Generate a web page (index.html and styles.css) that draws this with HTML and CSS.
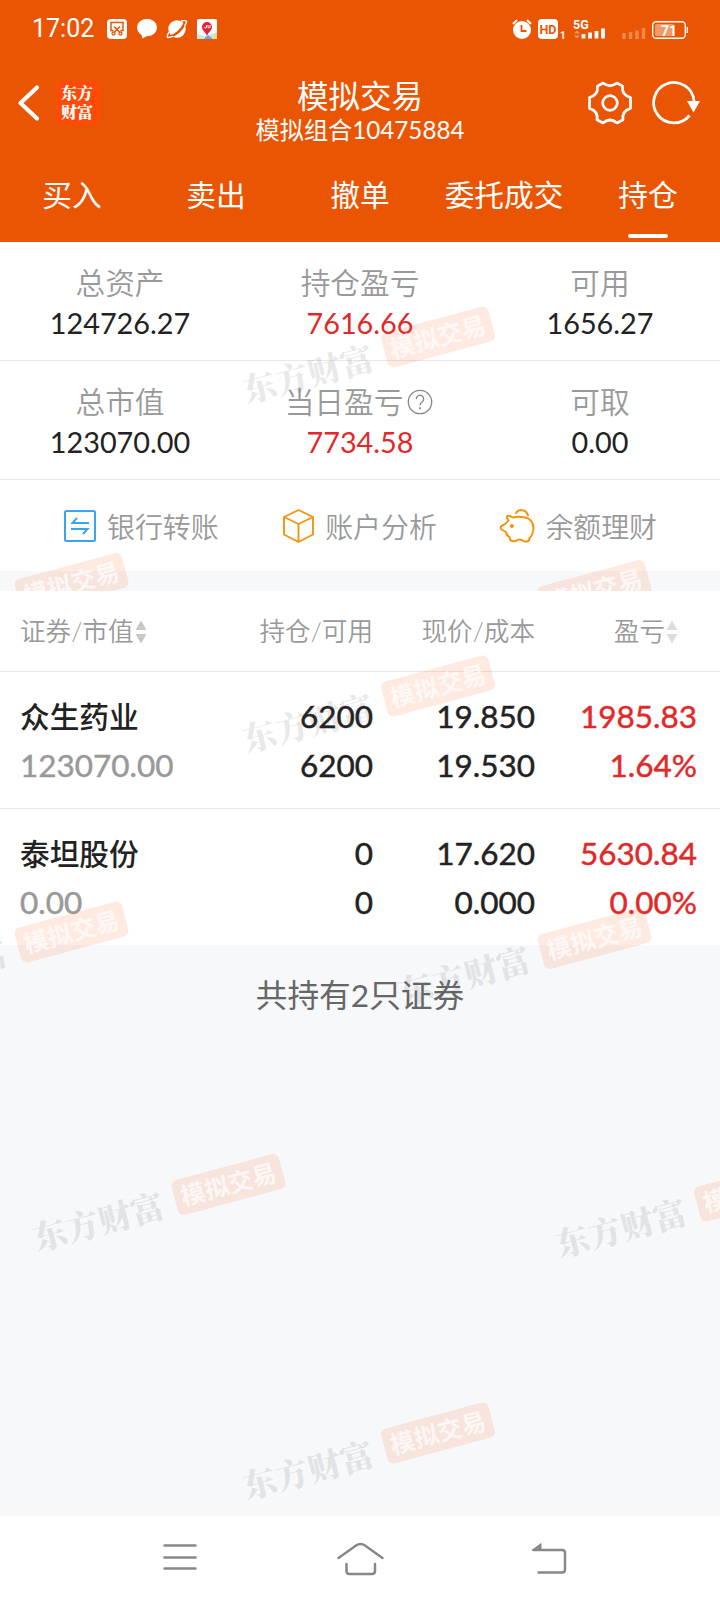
FILE: index.html
```html
<!DOCTYPE html>
<html lang="zh-CN">
<head>
<meta charset="utf-8">
<title>模拟交易</title>
<link rel="stylesheet" href="styles.css">
</head>
<body>
<div class="screen">
  <header class="header">
    <div class="status">
      <span class="clock">17:02</span>
      <svg class="status-left" width="112" height="24" viewBox="106 17 112 24">
        <rect x="107" y="19" width="20" height="20" rx="4" fill="#fff"/>
        <path d="M113.500 30.500h-2.500v-8h12v8h-2.500M114 26.500l6 6M120 26.500l-6 6" fill="none" stroke="#ea5504" stroke-width="1.500"/>
        <circle cx="113.500" cy="33.500" r="1.500" fill="none" stroke="#ea5504" stroke-width="1.300"/><circle cx="120.500" cy="33.500" r="1.500" fill="none" stroke="#ea5504" stroke-width="1.300"/>
        <ellipse cx="147" cy="27.500" rx="10" ry="8.700" fill="#fff"/><path d="M141 33l1.500 5.500 6-3.500z" fill="#fff"/>
        <circle cx="177" cy="29" r="8.700" fill="#fff"/>
        <path d="M169 36.500q10-1 16.500-14.500" fill="none" stroke="#ea5504" stroke-width="2.600"/>
        <path d="M169 32q-3 5-1 5.500 3 0 5-1.500M181 21q6-1 5.500 1-1 3-2 4" fill="none" stroke="#fff" stroke-width="1.400"/>
        <rect x="197" y="19" width="20" height="20" rx="1.500" fill="#fff"/>
        <path d="M197 34l8 2 12-4v7h-20z" fill="#c8e6e8"/><path d="M204 39l4-4 5 4z" fill="#5da9e8"/><path d="M212 36l5-3v6h-2z" fill="#f4dc87"/>
        <path d="M207 36c-1-4-5-5-5-9a5 5 0 0 1 10 0c0 4-4 5-5 9z" fill="#e0243a"/>
        <path d="M204.500 27a1 1 0 0 0 2 0v-2M208 25v2a1 1 0 0 0 2 0v-2" fill="none" stroke="#fff" stroke-width="1"/>
      </svg>
      <svg class="status-right" width="178" height="24" viewBox="511 17 178 24">
        <circle cx="522" cy="30" r="9" fill="#fff"/><path d="M521.500 25v6h5" fill="none" stroke="#ea5504" stroke-width="1.800"/>
        <path d="M513 24l4-4M527 20l4 4" stroke="#fff" stroke-width="2"/>
        <rect x="538" y="19" width="20" height="20" rx="4" fill="#fff"/>
        <text x="548" y="33.500" class="t-hd">HD</text><text x="560" y="39" class="t-one">1</text>
        <text x="573" y="28.500" class="t-5g">5G</text>
        <path d="M574 33.500l3-3 3 3zM574 35.500l3 3 3-3z" fill="#fff" opacity=".4"/>
        <path d="M583.500 34v4.500M590 32.500v6M596.500 31v7.500M603 28.500v10" stroke="#fff" stroke-width="3.800"/>
        <path d="M624 33v6M630.500 32v7M637 30.500v8.500M643.500 28v11" stroke="#fff" stroke-width="3.400" opacity=".3"/>
        <rect x="652.700" y="21.700" width="32.600" height="16.600" rx="3.500" fill="none" stroke="#fff" stroke-width="1.400"/>
        <rect x="655" y="24" width="19" height="12" rx="1.500" fill="#fff" opacity=".4"/>
        <path d="M687.300 27v6" stroke="#fff" stroke-width="1.400"/>
        <text x="669" y="35.500" class="t-bat">71</text>
      </svg>
    </div>
    <div class="bar">
      <div class="bar-left">
        <svg width="24" height="40" viewBox="17 83 24 40"><path d="M37 87.500L20.500 103 37 118.500" fill="none" stroke="#fff" stroke-width="4.200" stroke-linecap="round" stroke-linejoin="round"/></svg>
        <div class="logo">东方<br>财富</div>
      </div>
      <div class="titles"><h1>模拟交易</h1><p>模拟组合10475884</p></div>
      <div class="bar-right">
        <svg width="46" height="46" viewBox="587 80 46 46" fill="none" stroke="#fff" stroke-width="2.700" stroke-linejoin="round">
          <path d="M603 83L597.500 86.200Q598.500 95 589.500 97.500V108.500Q598.500 111 597 119.800L603 123Q610 117 617 123L623 119.800Q621.500 111 630.500 108.500V97.500Q621.500 95 622.500 86.200L617 83Q610 88.500 603 83Z"/>
          <circle cx="610" cy="103" r="7.300"/>
        </svg>
        <svg width="50" height="46" viewBox="651 80 50 46"><path d="M694 101A20.200 20.200 0 1 0 689.500 115.500" fill="none" stroke="#fff" stroke-width="2.800"/><path d="M687 101h13l-6.500 11.500z" fill="#fff"/></svg>
      </div>
    </div>
    <nav class="tabs"><span>买入</span><span>卖出</span><span>撤单</span><span>委托成交</span><span class="active">持仓</span></nav>
  </header>

  <section class="account">
    <div class="sums">
      <div class="cell"><span class="label">总资产</span><span class="num">124726.27</span></div>
      <div class="cell"><span class="label">持仓盈亏</span><span class="num red">7616.66</span></div>
      <div class="cell"><span class="label">可用</span><span class="num">1656.27</span></div>
    </div>
    <div class="sums">
      <div class="cell"><span class="label">总市值</span><span class="num">123070.00</span></div>
      <div class="cell"><span class="label help">当日盈亏<svg width="26" height="26" viewBox="0 0 26 26" fill="none" stroke="#888" stroke-width="1.300"><circle cx="13" cy="13" r="11.700"/><path d="M9.300 10a3.700 3.700 0 1 1 5.700 3c-1.500 1-2 1.500-2 3.500"/><path d="M13 18.300v2" stroke-width="1.800"/></svg></span><span class="num red">7734.58</span></div>
      <div class="cell"><span class="label">可取</span><span class="num">0.00</span></div>
    </div>
    <div class="actions">
      <div class="action"><svg width="34" height="34" viewBox="63 509 34 34" fill="none" stroke="#3aa5ee" stroke-width="2"><rect x="65" y="511" width="30" height="30" rx="1.500"/><path d="M89 523H72.500L77 518M71 529h16.500L83 534"/></svg><span>银行转账</span></div>
      <div class="action"><svg width="34" height="36" viewBox="282 508 34 36" fill="none" stroke="#f4950f" stroke-width="1.900" stroke-linejoin="round"><path d="M299.500 510L314 517v17.500L299.500 542 285 534.500V517zM285 517l14.500 7 14.500-7M299.500 524v18"/></svg><span>账户分析</span></div>
      <div class="action"><svg width="36" height="36" viewBox="500 508 36 36" fill="none" stroke="#f4950f" stroke-width="2" stroke-linecap="round" stroke-linejoin="round"><path d="M509.500 520.500Q507 517.500 508.500 515.800Q511 515.500 514 517.500Q520 515.800 526 517.500Q534 519 534.500 528Q534 535 530.500 538Q530.500 541.500 527.500 541.500Q524.500 542 523 540Q520 538.800 518 540Q517 542 513 541Q510.500 540.500 510.500 537Q507.500 535.500 507 532L502.500 529.500Q501 527.500 502.500 526Q506.500 524.500 509.500 520.500Z"/><path d="M517 513q3-4 7.500-2.500 3.500 1 4.500 5"/><circle cx="512.800" cy="526" r="1.600" fill="#f4950f" stroke-width="1"/></svg><span>余额理财</span></div>
    </div>
    <div class="strip"></div>
    <svg class="marks" width="720" height="349" viewBox="0 242 720 349">
      <defs>
        <g id="mark">
          <g transform="rotate(-15)">
            <rect x="-55.500" y="-18" width="111" height="36" rx="6" fill="#ff5a1e" opacity=".13"/>
            <text x="0" y="9" class="m-badge">模拟交易</text>
            <text x="-135" y="15" class="m-brand">东方财富</text>
          </g>
        </g>
      </defs>
      <use href="#mark" x="438" y="337"/><use href="#mark" x="71.500" y="583.500"/><use href="#mark" x="594.500" y="590.500"/>
    </svg>
  </section>

  <main class="main">
    <div class="holdings">
      <div class="row head">
        <span>证券/市值<svg class="sort" width="12" height="24" viewBox="0 0 12 24"><path d="M0.500 10L6 .500 11.500 10zM.500 14L6 23.500 11.500 14z" fill="#c8c8c8"/></svg></span>
        <span>持仓/可用</span><span>现价/成本</span>
        <span class="last">盈亏<svg class="sort" width="12" height="24" viewBox="0 0 12 24"><path d="M0.500 10L6 .500 11.500 10zM.500 14L6 23.500 11.500 14z" fill="#dedede"/></svg></span>
      </div>
      <div class="row">
        <div class="name"><b>众生药业</b><i>123070.00</i></div>
        <div><b>6200</b><b>6200</b></div>
        <div><b>19.850</b><b>19.530</b></div>
        <div class="red"><b>1985.83</b><b>1.64%</b></div>
      </div>
      <div class="row">
        <div class="name"><b>泰坦股份</b><i>0.00</i></div>
        <div><b>0</b><b>0</b></div>
        <div><b>17.620</b><b>0.000</b></div>
        <div class="red"><b>5630.84</b><b>0.00%</b></div>
      </div>
    </div>
    <p class="total">共持有2只证券</p>
    <svg class="marks" width="720" height="925" viewBox="0 591 720 925">
      <use href="#mark" x="438" y="686"/><use href="#mark" x="71.500" y="932"/><use href="#mark" x="594.500" y="938.500"/>
      <use href="#mark" x="228.500" y="1184.500"/><use href="#mark" x="751" y="1191"/><use href="#mark" x="438" y="1433"/>
    </svg>
  </main>

  <footer class="sysnav">
    <svg width="36" height="40" viewBox="0 0 36 40" stroke="#888" stroke-width="2.500" stroke-linecap="round"><path d="M2.500 5.500h31M2.500 17.500h31M2.500 28.500h31"/></svg>
    <svg width="50" height="40" viewBox="336 1539 50 40" fill="none" stroke="#888" stroke-width="2.500" stroke-linecap="round" stroke-linejoin="round"><path d="M338.500 1557L356 1544.500Q360.500 1541.500 365 1544.500L382.500 1557M346.500 1563v7q0 3 3 3h22.500q3 0 3-3v-7"/></svg>
    <svg width="40" height="40" viewBox="529 1539 40 40" fill="none" stroke="#888" stroke-width="2.500" stroke-linecap="round"><path d="M533.500 1549H562q3 0 3 3v16.500q0 3-3 3H538.500"/><path d="M532.500 1549l8.500-6.500v6.500z" fill="#888" stroke-width="1"/></svg>
  </footer>
</div>
</body>
</html>
```

FILE: styles.css
```css
* { box-sizing: border-box; margin: 0; padding: 0; }
body { width: 720px; background: #fff; font-family: Lato, "Noto Sans CJK SC", sans-serif; }
.screen { width: 720px; height: 1600px; display: flex; flex-direction: column; overflow: hidden; color: #222; }
.red { color: #e02a2a; }

.header { height: 242px; background: #ea5504; color: #fff; display: flex; flex-direction: column; }
.status { height: 58px; padding: 0 31px 0 32px; display: flex; align-items: center; }
.clock { width: 74px; font: 25px/60px Roboto, sans-serif; }
.status-right { margin-left: auto; }
.status text { fill: #fff; font-family: Roboto, sans-serif; font-weight: 700; }
.status .t-hd { fill: #ea5504; font-size: 12.500px; text-anchor: middle; }
.status .t-one { font-size: 10px; }
.status .t-5g { font-size: 12.500px; }
.status .t-bat { font-size: 14px; text-anchor: middle; }

.bar { height: 90px; display: grid; grid-template-columns: 190px 1fr 190px; }
.bar-left { display: flex; align-items: center; gap: 15px; padding-left: 17px; }
.logo { width: 44px; height: 44px; border-radius: 7px; background: #ff4a08; font: 900 16px/19px "Noto Serif CJK SC", "Noto Sans CJK SC", sans-serif; text-align: center; padding: 2px 2px 0 0; }
.titles { text-align: center; padding-top: 19px; white-space: nowrap; }
.titles h1 { font-size: 31.500px; font-weight: 400; line-height: 38px; }
.titles p { font-size: 24.200px; line-height: 30px; }
.bar-right { display: flex; align-items: center; gap: 18px; padding-left: 57px; }

.tabs { flex: 1; display: grid; grid-template-columns: repeat(5, 144px); text-align: center; font-size: 29.700px; line-height: 95px; }
.active { position: relative; }
.active::after { content: ""; position: absolute; left: 52px; bottom: 4px; width: 40px; height: 4px; border-radius: 2px; background: #fff; }

.account { position: relative; height: 349px; }
.sums { height: 119px; padding-top: 21px; border-bottom: 1px solid #e8e8e8; display: grid; grid-template-columns: repeat(3, 1fr); }
.cell { display: flex; flex-direction: column; align-items: center; }
.label { font-size: 29.700px; line-height: 40px; color: #999; font-weight: 350; }
.help { display: flex; align-items: center; gap: 4px; position: relative; left: -1px; }
.num { font-size: 28.800px; line-height: 41px; }
.actions { height: 91px; padding: 0 63px; display: flex; justify-content: space-between; align-items: center; }
.action { display: flex; align-items: center; gap: 10px; color: #999; font-size: 27.900px; font-weight: 350; }
.strip { height: 20px; background: #f6f8fa; }

.marks { position: absolute; left: 0; top: 0; overflow: hidden; pointer-events: none; }
.m-badge { font: 700 24.500px "Noto Sans CJK SC", sans-serif; fill: #fff; fill-opacity: .7; text-anchor: middle; }
.m-brand { font: 900 33.500px "Noto Serif CJK SC", "Noto Sans CJK SC", sans-serif; fill: #505050; fill-opacity: .13; text-anchor: middle; }

.main { position: relative; height: 925px; background: #f6f8fa; }
.holdings { background: #fff; }
.row { height: 137px; padding: 20px 23px 0 20px; display: grid; grid-template-columns: 191px 162px 162px 162px; text-align: right; border-bottom: 1px solid #e8e8e8; }
.row:last-child { height: 136px; border-bottom: 0; }
.row b, .row i { display: block; font-size: 31.500px; line-height: 49px; font-weight: 400; font-style: normal; -webkit-text-stroke: .45px currentColor; }
.row .name { text-align: left; }
.row .name b { font-size: 29.700px; font-weight: 500; -webkit-text-stroke: 0; }
.row i { color: #999; }
.row.head { height: 81px; padding-top: 0; color: #999; font-size: 25.600px; line-height: 81px; font-weight: 350; }
.row.head > :first-child { text-align: left; white-space: nowrap; }
.row.head .last { padding-right: 19px; white-space: nowrap; }
.sort { vertical-align: -3px; margin-left: 1px; }
.total { text-align: center; font-size: 31.700px; line-height: 101px; color: #666; }

.sysnav { height: 84px; padding: 4px 151px 0 162px; display: grid; grid-template-columns: 36px 50px 40px; column-gap: 138px; align-items: center; background: #fff; }
.sysnav svg:last-child { margin-left: 5px; }
```
